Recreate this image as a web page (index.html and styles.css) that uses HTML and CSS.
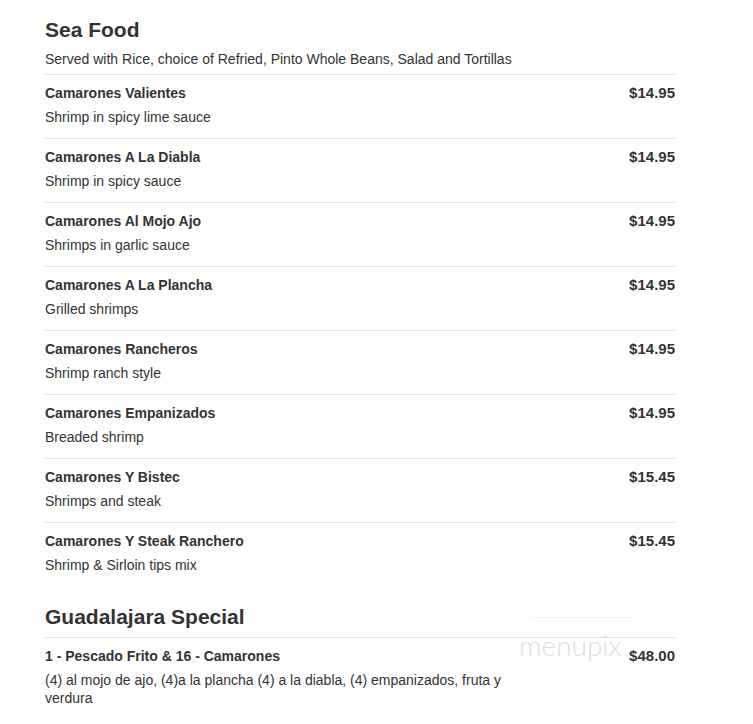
FILE: index.html
```html
<!DOCTYPE html>
<html>
<head>
<meta charset="utf-8">
<link rel="stylesheet" href="styles.css">
</head>
<body>
<div class="menu">
  <section class="section">
    <h2 class="section-title">Sea Food</h2>
    <p class="section-note">Served with Rice, choice of Refried, Pinto Whole Beans, Salad and Tortillas</p>
    <div class="item">
      <div class="item-main"><div class="item-name">Camarones Valientes</div><div class="item-desc">Shrimp in spicy lime sauce</div></div>
      <div class="item-price">$14.95</div>
    </div>
    <div class="item">
      <div class="item-main"><div class="item-name">Camarones A La Diabla</div><div class="item-desc">Shrimp in spicy sauce</div></div>
      <div class="item-price">$14.95</div>
    </div>
    <div class="item">
      <div class="item-main"><div class="item-name">Camarones Al Mojo Ajo</div><div class="item-desc">Shrimps in garlic sauce</div></div>
      <div class="item-price">$14.95</div>
    </div>
    <div class="item">
      <div class="item-main"><div class="item-name">Camarones A La Plancha</div><div class="item-desc">Grilled shrimps</div></div>
      <div class="item-price">$14.95</div>
    </div>
    <div class="item">
      <div class="item-main"><div class="item-name">Camarones Rancheros</div><div class="item-desc">Shrimp ranch style</div></div>
      <div class="item-price">$14.95</div>
    </div>
    <div class="item">
      <div class="item-main"><div class="item-name">Camarones Empanizados</div><div class="item-desc">Breaded shrimp</div></div>
      <div class="item-price">$14.95</div>
    </div>
    <div class="item">
      <div class="item-main"><div class="item-name">Camarones Y Bistec</div><div class="item-desc">Shrimps and steak</div></div>
      <div class="item-price">$15.45</div>
    </div>
    <div class="item">
      <div class="item-main"><div class="item-name">Camarones Y Steak Ranchero</div><div class="item-desc">Shrimp &amp; Sirloin tips mix</div></div>
      <div class="item-price">$15.45</div>
    </div>
  </section>
  <section class="section section-special">
    <h2 class="section-title">Guadalajara Special</h2>
    <div class="item">
      <div class="item-main"><div class="item-name">1 - Pescado Frito &amp; 16 - Camarones</div><div class="item-desc">(4) al mojo de ajo, (4)a la plancha (4) a la diabla, (4) empanizados, fruta y verdura</div></div>
      <div class="item-price">$48.00</div>
    </div>
    <div class="watermark">menupix</div>
  </section>
</div>
</body>
</html>
```
FILE: styles.css
```css
html, body {
  margin: 0;
  padding: 0;
  background: #fff;
}
body {
  font-family: "Liberation Sans", Arial, sans-serif;
  color: #333;
  font-size: 14px;
}
.menu {
  width: 630px;
  padding: 17px 0 0 45px;
}
.section-title {
  margin: 0;
  font-size: 21px;
  font-weight: bold;
  line-height: 26px;
  color: #333;
}
.section-note {
  margin: 6px 0 0;
  line-height: 20px;
  padding-bottom: 5px;
}
.item {
  display: flex;
  justify-content: space-between;
  align-items: flex-start;
  border-top: 1px solid #e3e3e3;
  padding: 7px 0 9px;
}
.item-main {
  width: 470px;
}
.item-name {
  font-weight: bold;
  line-height: 22px;
}
.item-desc {
  line-height: 24px;
  margin-top: 1px;
}
.item-price {
  font-weight: bold;
  font-size: 15px;
  line-height: 22px;
}
.section-special {
  position: relative;
  margin-top: 18px;
}
.section-special .section-title {
  padding-bottom: 7px;
}
.section-special .item-desc {
  line-height: 18px;
  margin-top: 4px;
}
.watermark {
  position: absolute;
  left: 474px;
  top: 27px;
  font-family: Lato, "Liberation Sans", sans-serif;
  font-weight: 300;
  font-size: 28px;
  line-height: 28px;
  color: #dedede;
}
.watermark::before {
  content: "";
  position: absolute;
  left: 10px;
  right: -10px;
  top: -14px;
  border-top: 1px solid #f4f4f4;
}
```
